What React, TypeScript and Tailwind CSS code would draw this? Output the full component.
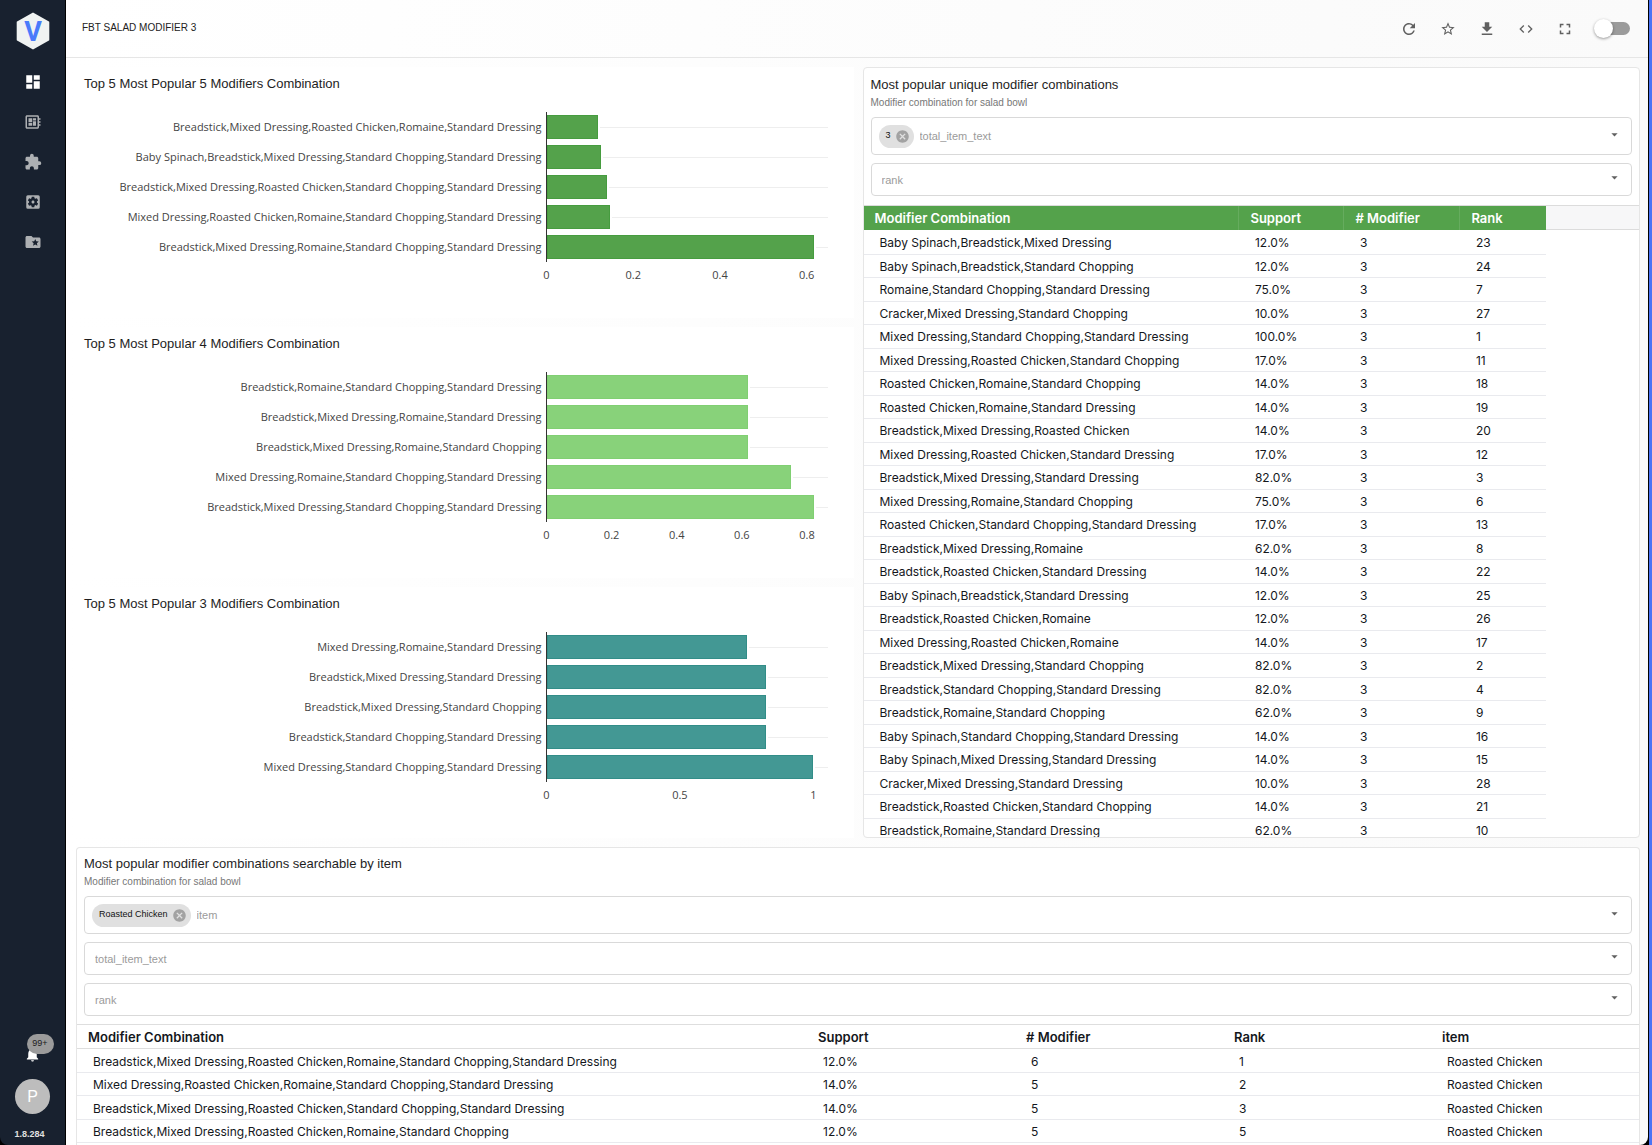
import { useState } from "react";
import type { ComponentType } from "react";
import {
  MdArrowDropDown,
  MdCancel,
  MdCode,
  MdDashboard,
  MdDeveloperBoard,
  MdDownload,
  MdExtension,
  MdFolderSpecial,
  MdFullscreen,
  MdNotifications,
  MdRefresh,
  MdSettingsApplications,
  MdStarOutline,
} from "react-icons/md";

type Icon = ComponentType<{ size?: number; className?: string }>;

type Bar = { label: string; value: number };

type ChartSpec = {
  title: string;
  max: number;
  ticks: number[];
  barClass: string;
  bars: Bar[];
};

const charts: ChartSpec[] = [
  {
    title: "Top 5 Most Popular 5 Modifiers Combination",
    max: 0.648,
    ticks: [0, 0.2, 0.4, 0.6],
    barClass: "bg-[#54a24b] border-[#469c3f]",
    bars: [
      { label: "Breadstick,Mixed Dressing,Roasted Chicken,Romaine,Standard Dressing", value: 0.1175 },
      { label: "Baby Spinach,Breadstick,Mixed Dressing,Standard Chopping,Standard Dressing", value: 0.124 },
      { label: "Breadstick,Mixed Dressing,Roasted Chicken,Standard Chopping,Standard Dressing", value: 0.137 },
      { label: "Mixed Dressing,Roasted Chicken,Romaine,Standard Chopping,Standard Dressing", value: 0.144 },
      { label: "Breadstick,Mixed Dressing,Romaine,Standard Chopping,Standard Dressing", value: 0.616 },
    ],
  },
  {
    title: "Top 5 Most Popular 4 Modifiers Combination",
    max: 0.863,
    ticks: [0, 0.2, 0.4, 0.6, 0.8],
    barClass: "bg-[#88d27a] border-[#80cf72]",
    bars: [
      { label: "Breadstick,Romaine,Standard Chopping,Standard Dressing", value: 0.617 },
      { label: "Breadstick,Mixed Dressing,Romaine,Standard Dressing", value: 0.617 },
      { label: "Breadstick,Mixed Dressing,Romaine,Standard Chopping", value: 0.617 },
      { label: "Mixed Dressing,Romaine,Standard Chopping,Standard Dressing", value: 0.75 },
      { label: "Breadstick,Mixed Dressing,Standard Chopping,Standard Dressing", value: 0.82 },
    ],
  },
  {
    title: "Top 5 Most Popular 3 Modifiers Combination",
    max: 1.053,
    ticks: [0, 0.5, 1],
    barClass: "bg-[#439894] border-[#328d88]",
    bars: [
      { label: "Mixed Dressing,Romaine,Standard Dressing", value: 0.75 },
      { label: "Breadstick,Mixed Dressing,Standard Dressing", value: 0.82 },
      { label: "Breadstick,Mixed Dressing,Standard Chopping", value: 0.82 },
      { label: "Breadstick,Standard Chopping,Standard Dressing", value: 0.82 },
      { label: "Mixed Dressing,Standard Chopping,Standard Dressing", value: 1 },
    ],
  },
];

const uniqueRows: [string, string, number][] = [
  ["Baby Spinach,Breadstick,Mixed Dressing", "12.0%", 23],
  ["Baby Spinach,Breadstick,Standard Chopping", "12.0%", 24],
  ["Romaine,Standard Chopping,Standard Dressing", "75.0%", 7],
  ["Cracker,Mixed Dressing,Standard Chopping", "10.0%", 27],
  ["Mixed Dressing,Standard Chopping,Standard Dressing", "100.0%", 1],
  ["Mixed Dressing,Roasted Chicken,Standard Chopping", "17.0%", 11],
  ["Roasted Chicken,Romaine,Standard Chopping", "14.0%", 18],
  ["Roasted Chicken,Romaine,Standard Dressing", "14.0%", 19],
  ["Breadstick,Mixed Dressing,Roasted Chicken", "14.0%", 20],
  ["Mixed Dressing,Roasted Chicken,Standard Dressing", "17.0%", 12],
  ["Breadstick,Mixed Dressing,Standard Dressing", "82.0%", 3],
  ["Mixed Dressing,Romaine,Standard Chopping", "75.0%", 6],
  ["Roasted Chicken,Standard Chopping,Standard Dressing", "17.0%", 13],
  ["Breadstick,Mixed Dressing,Romaine", "62.0%", 8],
  ["Breadstick,Roasted Chicken,Standard Dressing", "14.0%", 22],
  ["Baby Spinach,Breadstick,Standard Dressing", "12.0%", 25],
  ["Breadstick,Roasted Chicken,Romaine", "12.0%", 26],
  ["Mixed Dressing,Roasted Chicken,Romaine", "14.0%", 17],
  ["Breadstick,Mixed Dressing,Standard Chopping", "82.0%", 2],
  ["Breadstick,Standard Chopping,Standard Dressing", "82.0%", 4],
  ["Breadstick,Romaine,Standard Chopping", "62.0%", 9],
  ["Baby Spinach,Standard Chopping,Standard Dressing", "14.0%", 16],
  ["Baby Spinach,Mixed Dressing,Standard Dressing", "14.0%", 15],
  ["Cracker,Mixed Dressing,Standard Dressing", "10.0%", 28],
  ["Breadstick,Roasted Chicken,Standard Chopping", "14.0%", 21],
  ["Breadstick,Romaine,Standard Dressing", "62.0%", 10],
];

const itemRows: [string, string, number, number, string][] = [
  ["Breadstick,Mixed Dressing,Roasted Chicken,Romaine,Standard Chopping,Standard Dressing", "12.0%", 6, 1, "Roasted Chicken"],
  ["Mixed Dressing,Roasted Chicken,Romaine,Standard Chopping,Standard Dressing", "14.0%", 5, 2, "Roasted Chicken"],
  ["Breadstick,Mixed Dressing,Roasted Chicken,Standard Chopping,Standard Dressing", "14.0%", 5, 3, "Roasted Chicken"],
  ["Breadstick,Mixed Dressing,Roasted Chicken,Romaine,Standard Chopping", "12.0%", 5, 5, "Roasted Chicken"],
];

const navItems: { label: string; icon: Icon }[] = [
  { label: "Dashboards", icon: MdDashboard },
  { label: "Boards", icon: MdDeveloperBoard },
  { label: "Extensions", icon: MdExtension },
  { label: "Settings", icon: MdSettingsApplications },
  { label: "Favourites", icon: MdFolderSpecial },
];

const toolbar: { label: string; icon: Icon; size: number }[] = [
  { label: "Refresh", icon: MdRefresh, size: 18 },
  { label: "Favourite", icon: MdStarOutline, size: 16 },
  { label: "Download", icon: MdDownload, size: 18 },
  { label: "Embed code", icon: MdCode, size: 16 },
  { label: "Fullscreen", icon: MdFullscreen, size: 18 },
];

function Logo() {
  return (
    <svg viewBox="0 0 34 38" className="h-[38px] w-[34px]" role="img" aria-label="Home">
      <path d="M17 0.5 32.5 9.2a1 1 0 0 1 .8 1v17.6a1 1 0 0 1-.8 1L17 37.5 1.5 28.8a1 1 0 0 1-.8-1V10.2a1 1 0 0 1 .8-1z" fill="#f0f3f2" />
      <text x="17" y="29" textAnchor="middle" fontFamily="Roboto, sans-serif" fontWeight="700" fontSize="27" fill="#4a7bfb">
        V
      </text>
    </svg>
  );
}

function Sidebar() {
  return (
    <aside className="flex w-[66px] shrink-0 flex-col items-center rounded-bl-lg border-r border-black bg-[#18212f] pt-3">
      <a href="#home">
        <Logo />
      </a>
      <nav className="mt-[23px] flex flex-col items-center gap-[22px]">
        {navItems.map(({ label, icon: IconFor }, i) => (
          <a
            key={label}
            href={`#${label.toLowerCase()}`}
            aria-label={label}
            className={i === 0 ? "text-white" : "text-[#adb0b3]"}
          >
            <IconFor size={18} />
          </a>
        ))}
      </nav>
      <div className="mt-auto flex flex-col items-center pb-[3px]">
        <button type="button" aria-label="Notifications, 99+" className="relative h-5 w-5 text-white">
          <MdNotifications size={17} className="mx-auto mt-1" />
          <span className="absolute bottom-2 left-1 flex h-5 w-[27px] items-center justify-center rounded-full bg-[#9b9b9b] text-[9px] text-[#1b1b1b]">
            99+
          </span>
        </button>
        <button
          type="button"
          aria-label="Profile"
          className="mt-[17px] flex h-[35px] w-[35px] items-center justify-center rounded-full bg-[#bdbdbd] text-base text-white"
        >
          P
        </button>
        <span className="mt-3 pr-1.5 text-[9px] font-bold leading-4 text-[#e0e0e0]">1.8.284</span>
      </div>
    </aside>
  );
}

function Header() {
  const [on, setOn] = useState(false);
  return (
    <header className="flex h-[58px] items-center justify-between border-b border-[#e6e6e6] pr-[18px] pl-4">
      <h1 className="pb-0.5 text-[10px] leading-4 text-[#222]">FBT SALAD MODIFIER 3</h1>
      <div className="flex items-center gap-[15px]">
        {toolbar.map(({ label, icon: IconFor, size }) => (
          <button
            key={label}
            type="button"
            aria-label={label}
            className="flex h-6 w-6 items-center justify-center text-[#606060]"
          >
            <IconFor size={size} />
          </button>
        ))}
        <label className="relative ml-0.5 flex h-5 w-9 items-center justify-end">
          <input
            type="checkbox"
            role="switch"
            aria-label="Edit mode"
            checked={on}
            onChange={() => setOn(!on)}
            className="peer sr-only"
          />
          <span className="h-[13px] w-[30px] rounded-full bg-[#9b9b9b]" />
          <span className="absolute left-0 h-[19px] w-[19px] rounded-full bg-white shadow-[0_1px_3px_rgba(0,0,0,0.4)] peer-checked:left-4" />
        </label>
      </div>
    </header>
  );
}

function BarChart({ chart }: { chart: ChartSpec }) {
  return (
    <section className="h-[251px] bg-white px-2 pt-[7px]">
      <h2 className="text-[13px] leading-5 text-[#1e1e1e]">{chart.title}</h2>
      <div className="mt-[18px] flex pr-[18px] font-['Open_Sans',sans-serif] text-[#444]">
        <div className="min-w-0 flex-1 text-[11px]">
          {chart.bars.map((b) => (
            <div key={b.label} className="h-[30px] pr-[5px] text-right leading-[30px] whitespace-nowrap">
              {b.label}
            </div>
          ))}
        </div>
        <div className="w-[37.8%] text-[11px]">
          <div className="border-l border-[#333]">
            {chart.bars.map((b) => (
              <div key={b.label} className="flex h-[30px] items-center">
                <div
                  className={`h-6 shrink-0 border ${chart.barClass}`}
                  style={{ width: `${(b.value / chart.max) * 100}%` }}
                />
                <div className="ml-0.5 h-px flex-1 bg-[#eeeeee]" />
              </div>
            ))}
          </div>
          <div className="relative mt-[3px] h-5 leading-5">
            {chart.ticks.map((t) => (
              <span
                key={t}
                className="absolute -translate-x-1/2"
                style={{ left: `${(t / chart.max) * 100}%` }}
              >
                {t}
              </span>
            ))}
          </div>
        </div>
      </div>
    </section>
  );
}

function Filter({ name, initial }: { name: string; initial?: string }) {
  const [chip, setChip] = useState(initial);
  return (
    <div
      className={`flex items-center rounded border border-[#d9d9d9] bg-white pr-[9px] ${
        chip ? "h-[38px] pl-[7px]" : "h-[33px] pl-[10px]"
      }`}
    >
      {chip && (
        <span className="mr-1.5 flex h-[23px] items-center gap-1 rounded-full bg-[#e0e0e0] pr-1 pl-[7px] text-[9px] text-[#111]">
          {chip}
          <button type="button" aria-label={`Remove ${chip}`} onClick={() => setChip(undefined)} className="text-[#a2a2a2]">
            <MdCancel size={15} />
          </button>
        </span>
      )}
      <input
        type="text"
        role="combobox"
        aria-expanded={false}
        aria-label={name}
        placeholder={name}
        className="h-5 min-w-0 flex-1 text-[11px] text-[#222] outline-none placeholder:text-[#9b9b9b]"
      />
      <button type="button" aria-label={`Open ${name}`} className="mb-1 text-[#606060]">
        <MdArrowDropDown size={15} />
      </button>
    </div>
  );
}

function PanelHead({ title }: { title: string }) {
  return (
    <>
      <h2 className="text-[13px] leading-5 text-[#1e1e1e]">{title}</h2>
      <p className="text-[10px] leading-4 text-[#777]">Modifier combination for salad bowl</p>
    </>
  );
}

const bodyRow = "odd:h-6 even:h-[23px] border-b border-[#e9eaee]";
const bodyCell = "pt-0.5 pl-4";

function UniquePanel() {
  return (
    <section className="h-[771px] overflow-hidden rounded border border-[#e6e6e6] bg-white">
      <div className="flex flex-col px-[7px] pt-[7px]">
        <PanelHead title="Most popular unique modifier combinations" />
        <div className="mt-[6px] mb-[9px] flex flex-col gap-2">
          <Filter name="total_item_text" initial="3" />
          <Filter name="rank" />
        </div>
      </div>
      <div className="flex border-t border-[#dcdcdc]">
        <table className="w-[88%] table-fixed border-collapse font-['Inter',sans-serif] text-[12px] leading-4 whitespace-nowrap text-[#14171c]">
          <colgroup>
            <col />
            <col className="w-[105px]" />
            <col className="w-[116px]" />
            <col className="w-[86px]" />
          </colgroup>
          <thead>
            <tr className="h-6 bg-[#54a24b] text-left text-[13px] text-white">
              {["Modifier Combination", "Support", "# Modifier", "Rank"].map((h) => (
                <th key={h} className="border-l border-[#66ac5e] pl-[11px] font-semibold first:border-l-0">
                  {h}
                </th>
              ))}
            </tr>
          </thead>
          <tbody>
            {uniqueRows.map(([combo, support, rank]) => (
              <tr key={combo} className={bodyRow}>
                <td className={bodyCell}>{combo}</td>
                <td className={bodyCell}>{support}</td>
                <td className={bodyCell}>3</td>
                <td className={bodyCell}>{rank}</td>
              </tr>
            ))}
          </tbody>
        </table>
        <div className="h-6 flex-1 border-b border-[#dcdcdc] bg-[#f7f7f8]" />
      </div>
    </section>
  );
}

function ItemPanel() {
  return (
    <section className="min-h-0 flex-1 overflow-hidden rounded-t border border-b-0 border-[#e6e6e6] bg-white">
      <div className="flex flex-col px-[7px] pt-[6px]">
        <PanelHead title="Most popular modifier combinations searchable by item" />
        <div className="mt-[6px] mb-[8px] flex flex-col gap-2">
          <Filter name="item" initial="Roasted Chicken" />
          <Filter name="total_item_text" />
          <Filter name="rank" />
        </div>
      </div>
      <table className="w-full table-fixed border-collapse border-t border-[#dedede] font-['Inter',sans-serif] text-[12px] leading-4 whitespace-nowrap text-[#14171c]">
        <colgroup>
          <col />
          <col className="w-[208px]" />
          <col className="w-[208px]" />
          <col className="w-[208px]" />
          <col className="w-[208px]" />
        </colgroup>
        <thead>
          <tr className="h-6 border-b border-[#dedede] text-left text-[13px]">
            {["Modifier Combination", "Support", "# Modifier", "Rank", "item"].map((h) => (
              <th key={h} className="pl-[11px] font-semibold">
                {h}
              </th>
            ))}
          </tr>
        </thead>
        <tbody>
          {itemRows.map((row) => (
            <tr key={row[0]} className={bodyRow}>
              {row.map((cell, i) => (
                <td key={i} className={bodyCell}>
                  {cell}
                </td>
              ))}
            </tr>
          ))}
        </tbody>
      </table>
    </section>
  );
}

export default function App() {
  return (
    <div className="flex h-screen bg-[#4a74f5] pr-[3px] font-['Liberation_Sans',Arial,sans-serif]">
      <div className="flex min-w-0 flex-1 bg-black pr-px">
        <Sidebar />
        <div className="flex min-w-0 flex-1 flex-col overflow-hidden rounded-br-lg bg-linear-to-r from-white to-[#fafafa]">
          <Header />
          <main className="flex min-h-0 flex-1 flex-col gap-[9px] pt-[9px] pr-2 pl-[10px]">
            <div className="grid shrink-0 grid-cols-2 gap-[9px]">
              <div className="flex flex-col gap-[9px]">
                {charts.map((c) => (
                  <BarChart key={c.title} chart={c} />
                ))}
              </div>
              <UniquePanel />
            </div>
            <ItemPanel />
          </main>
        </div>
      </div>
    </div>
  );
}
